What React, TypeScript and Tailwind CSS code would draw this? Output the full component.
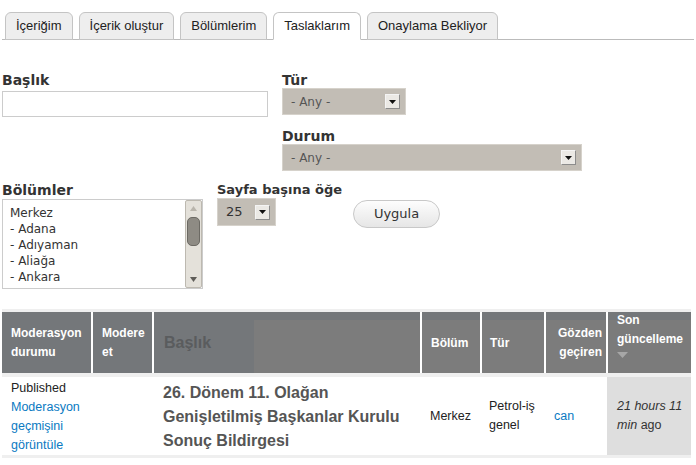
import React from 'react'

const tabs = [
  { label: 'İçeriğim', active: false },
  { label: 'İçerik oluştur', active: false },
  { label: 'Bölümlerim', active: false },
  { label: 'Taslaklarım', active: true },
  { label: 'Onaylama Bekliyor', active: false },
]

const regions = ['Merkez', '- Adana', '- Adıyaman', '- Aliağa', '- Ankara']

function ArrowBox() {
  return (
    <span className="flex h-[15px] w-[15px] items-center justify-center border border-t-[#f4f4f4] border-l-[#f4f4f4] border-r-[#8c8c8c] border-b-[#8c8c8c] bg-[#ebe9e5]">
      <svg width="7" height="4" viewBox="0 0 7 4">
        <path d="M0 0h7L3.5 4z" fill="#111" />
      </svg>
    </span>
  )
}

function FakeSelect({ value, width }: { value: string; width: string }) {
  return (
    <div className={`flex h-[27px] items-center justify-between border border-[#d6d2cb] bg-[#c2bdb5] pl-[8px] pr-[5px] text-[12px] text-[#555] ${width}`}>
      <span>{value}</span>
      <ArrowBox />
    </div>
  )
}

export default function App() {
  return (
    <div className="min-h-screen bg-white text-[#333]">
      {/* Tabs */}
      <div className="px-[2px] pt-[12px] font-['Liberation_Sans',Arial,sans-serif]">
        <ul className="flex h-[28px] gap-[6px] border-b border-[#bbb] pl-[3px] pr-[6px]">
          {tabs.map((t) => (
            <li
              key={t.label}
              className={`-mb-px flex h-[28px] items-center rounded-t-[6px] border border-[#c4c4c4] px-[10px] text-[13px] text-[#222] ${
                t.active ? 'border-b-white bg-white' : 'bg-[#eee]'
              }`}
            >
              {t.label}
            </li>
          ))}
        </ul>
      </div>

      {/* Filters */}
      <div className="px-[2px] pt-[30px] font-['DejaVu_Sans',Verdana,sans-serif]">
        <div className="flex">
          <div className="w-[266px]">
            <div className="h-[20px] text-[14px] font-bold leading-[20px] text-[#333]">Başlık</div>
            <div className="mt-[1px] h-[26px] border border-[#ccc] bg-white" />
          </div>
          <div className="ml-[14px]">
            <div className="h-[18px] text-[14px] font-bold leading-[20px] text-[#333]">Tür</div>
            <FakeSelect value="- Any -" width="w-[124px]" />
            <div className="mt-[12px] h-[17px] text-[14px] font-bold leading-[18px] text-[#333]">Durum</div>
            <FakeSelect value="- Any -" width="w-[300px]" />
          </div>
        </div>

        <div className="mt-[11px] flex">
          <div className="w-[201px]">
            <div className="h-[17px] text-[14px] font-bold leading-[17px] text-[#333]">Bölümler</div>
            <div className="flex h-[90px] border border-[#ccc] bg-white">
              <ul className="flex-1 pl-[7px] pt-[5px] text-[12px] leading-[16px] text-[#333]">
                {regions.map((r) => (
                  <li key={r}>{r}</li>
                ))}
              </ul>
              <div className="flex w-[17px] flex-col items-center rounded-[2px] border border-[#bdb9b0] bg-[#e4e1da] py-[2px]">
                <svg width="7" height="5" viewBox="0 0 7 5" className="mt-[3px]">
                  <path d="M0 5h7L3.5 0z" fill="#b9b5ac" />
                </svg>
                <div className="mt-[6px] h-[29px] w-[13px] rounded-[5px] border border-[#6c6a64] bg-[#8e8b84]" />
                <div className="flex-1" />
                <svg width="7" height="5" viewBox="0 0 7 5" className="mb-[3px]">
                  <path d="M0 0h7L3.5 5z" fill="#5f5d58" />
                </svg>
              </div>
            </div>
          </div>
          <div className="ml-[14px]">
            <div className="h-[16px] text-[13px] font-bold leading-[16px] text-[#333]">Sayfa başına öğe</div>
            <div className="flex h-[28px] w-[59px] items-center justify-between border border-[#d6d2cb] bg-[#c2bdb5] pl-[8px] pr-[5px] text-[13px] text-[#333]">
              <span>25</span>
              <ArrowBox />
            </div>
          </div>
          <div className="ml-[11px] pt-[18px]">
            <button className="h-[28px] w-[87px] rounded-full border border-[#c8c8c8] bg-gradient-to-b from-[#fdfdfd] to-[#e6e6e6] text-[13px] text-[#333]">
              Uygula
            </button>
          </div>
        </div>
      </div>

      {/* Table */}
      <div className="mt-[20px] px-[2px] font-['Liberation_Sans',Arial,sans-serif]">
        <div className="h-[3px] w-[689px] bg-[#efefef]" />
        <table className="relative w-[689px] border-collapse text-[12px]">
          <thead>
            <tr className="relative h-[63px] bg-[#74777a] text-left align-middle font-bold text-white">
              <th className="w-[90px] border-r-2 border-white pl-[9px] pr-[4px] font-bold leading-[19px]">
                Moderasyon durumu
              </th>
              <th className="w-[61px] border-r-2 border-white pl-[9px] pr-[4px] font-bold leading-[19px]">
                Modere et
              </th>
              <th className="relative w-[268px] border-r-2 border-white pl-[10px] font-bold">
                <div className="absolute bottom-0 right-0 top-[8px] w-[166px] bg-[#7c7c7c]" />
                <span className="relative text-[16px] text-[#5a5c5e]">Başlık</span>
              </th>
              <th className="relative w-[60px] border-r-2 border-white pl-[9px] font-bold">
                <div className="absolute inset-x-0 bottom-0 top-[8px] bg-[#7c7c7c]" />
                <span className="relative">Bölüm</span>
              </th>
              <th className="relative w-[64px] border-r-2 border-white pl-[8px] font-bold">
                <div className="absolute inset-x-0 bottom-0 top-[8px] bg-[#7c7c7c]" />
                <span className="relative">Tür</span>
              </th>
              <th className="relative w-[62px] border-r-2 border-white pr-[4px] text-right font-bold leading-[19px]">
                <div className="absolute inset-x-0 bottom-0 top-[8px] bg-[#7c7c7c]" />
                <span className="relative inline-block">Gözden geçiren</span>
              </th>
              <th className="relative pl-[9px] align-top font-bold leading-[19px]">
                <div className="absolute inset-x-0 bottom-0 top-[8px] bg-[#7b7b7b]" />
                <div className="relative -mt-[1px]">Son<br />güncelleme</div>
                <svg width="11" height="6" viewBox="0 0 11 6" className="relative mt-[3px]">
                  <path d="M0 0h11L5.5 6z" fill="#a7a7a7" />
                </svg>
              </th>
            </tr>
          </thead>
          <tbody>
            <tr className="border-t-4 border-b-[3px] border-t-[#efefef] border-b-[#efefef] align-middle">
              <td className="h-[78px] pl-[9px] pt-[2px] text-[12.5px] leading-[19px] text-[#222]">
                Published
                <br />
                <a className="text-[#0a7ac2]">Moderasyon geçmişini görüntüle</a>
              </td>
              <td />
              <td className="pl-[10px] pr-[6px] pt-[2px] text-[16px] font-bold leading-[24px] text-[#555]">
                26. Dönem 11. Olağan Genişletilmiş Başkanlar Kurulu Sonuç Bildirgesi
              </td>
              <td className="pl-[9px] text-[12.5px] text-[#222]">Merkez</td>
              <td className="pl-[8px] pr-[4px] text-[12.5px] leading-[19px] text-[#222]">Petrol-iş genel</td>
              <td className="pl-[9px] text-[12.5px] text-[#0a7ac2]">can</td>
              <td className="bg-[#dedede] pl-[10px] pr-[4px] text-[12.5px] leading-[19px] text-[#333]">
                <em>21 hours 11 min</em> ago
              </td>
            </tr>
          </tbody>
        </table>
      </div>
    </div>
  )
}
